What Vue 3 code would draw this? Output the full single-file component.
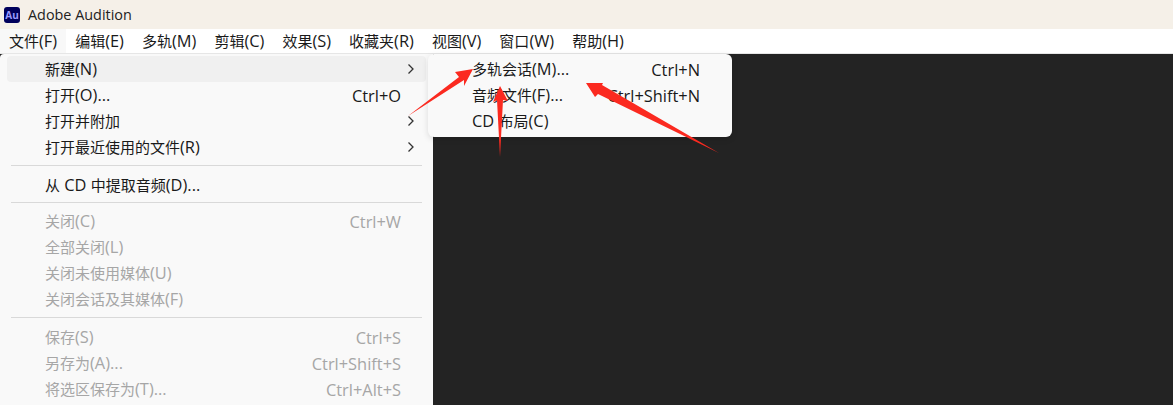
<script setup>
const menus = ["文件(F)", "编辑(E)", "多轨(M)", "剪辑(C)", "效果(S)", "收藏夹(R)", "视图(V)", "窗口(W)", "帮助(H)"];

const fileMenu = [
  { label: "新建(N)", arrow: true, active: true },
  { label: "打开(O)...", key: "Ctrl+O" },
  { label: "打开并附加", arrow: true },
  { label: "打开最近使用的文件(R)", arrow: true },
  { sep: true },
  { label: "从 CD 中提取音频(D)..." },
  { sep: true, tight: true },
  { label: "关闭(C)", key: "Ctrl+W", off: true },
  { label: "全部关闭(L)", off: true },
  { label: "关闭未使用媒体(U)", off: true },
  { label: "关闭会话及其媒体(F)", off: true },
  { sep: true },
  { label: "保存(S)", key: "Ctrl+S", off: true },
  { label: "另存为(A)...", key: "Ctrl+Shift+S", off: true },
  { label: "将选区保存为(T)...", key: "Ctrl+Alt+S", off: true },
];

const newMenu = [
  { label: "多轨会话(M)...", key: "Ctrl+N" },
  { label: "音频文件(F)...", key: "Ctrl+Shift+N" },
  { label: "CD 布局(C)" },
];

// latin runs are set a bit larger than the chinese ones
const runs = (text) => text.match(/[\x20-\x7e]+|[^\x20-\x7e]+/g);
const isLatin = (run) => /^[\x20-\x7e]/.test(run);
</script>

<template>
  <div class="window">
    <div class="titlebar">
      <span class="logo">Au</span>
      <span class="title">Adobe Audition</span>
    </div>

    <nav class="menubar">
      <span v-for="(m, i) in menus" :key="m" class="menu-name" :class="{ open: i === 0 }">
        <span v-for="run in runs(m)" :key="run" :class="{ latin: isLatin(run) }">{{ run }}</span>
      </span>
    </nav>

    <div class="main">
      <ul class="menu file-menu">
        <template v-for="(item, i) in fileMenu" :key="i">
          <li v-if="item.sep" class="sep" :class="{ tight: item.tight }"></li>
          <li v-else class="item" :class="{ active: item.active, off: item.off }">
            <span class="label">
              <span v-for="run in runs(item.label)" :key="run" :class="{ latin: isLatin(run) }">{{ run }}</span>
            </span>
            <span v-if="item.key" class="latin">{{ item.key }}</span>
            <svg v-if="item.arrow" class="chevron" width="8" height="12" viewBox="0 0 8 12">
              <path d="M1.5 1.5 6 6 1.5 10.5" fill="none" stroke="#333" stroke-width="1.3" />
            </svg>
          </li>
        </template>
      </ul>

      <ul class="menu new-menu">
        <li v-for="item in newMenu" :key="item.label" class="item">
          <span class="label">
            <span v-for="run in runs(item.label)" :key="run" :class="{ latin: isLatin(run) }">{{ run }}</span>
          </span>
          <span v-if="item.key" class="latin">{{ item.key }}</span>
        </li>
      </ul>
    </div>

    <svg class="arrows" width="1173" height="405" viewBox="0 0 1173 405">
      <polygon points="473,69 455,72 459,77 408,116 464,80 464,86" />
      <polygon points="500,86 493,102 497,100 500,157 503,100 508,101" />
      <polygon points="586,83 603,83 602,85 719,153 598,94 595,97" />
    </svg>
  </div>
</template>

<style scoped>
.window {
  position: relative;
  display: flex;
  flex-direction: column;
  height: 405px;
  overflow: hidden;
  font-family: "Open Sans", "Noto Sans CJK SC", sans-serif;
  font-size: 15px;
  color: #1a1a1a;
}

.latin {
  font-size: 16.4px;
}

.titlebar {
  display: flex;
  align-items: center;
  height: 29px;
  padding-left: 4px;
  background: #f5f0e8;
}

.logo {
  width: 16px;
  height: 16px;
  border-radius: 3px;
  background: #00005b;
  color: #9a9aff;
  font-size: 10px;
  font-weight: 700;
  line-height: 16px;
  text-align: center;
}

.title {
  margin-left: 8px;
  font-size: 14.4px;
  color: #222;
}

.menubar {
  display: flex;
  height: 24px;
  background: #fff;
  border-bottom: 1px solid #e6e6e6;
}

.menu-name {
  padding: 0 9px;
  line-height: 24px;
}

.menu-name.open {
  background: #f8f8f8;
}

.main {
  position: relative;
  flex: 1;
  background: #232323;
}

.menu {
  margin: 0;
  list-style: none;
  background: #f9f9f9;
}

.file-menu {
  width: 433px;
  height: 100%;
  box-sizing: border-box;
  padding: 2px 7px 0;
  border-top-left-radius: 4px;
}

.new-menu {
  position: absolute;
  left: 428px;
  top: 0;
  width: 304px;
  box-sizing: border-box;
  padding: 2px 0 3px;
  border-radius: 6px;
  box-shadow: 0 2px 6px rgba(0, 0, 0, 0.12);
}

.item {
  position: relative;
  display: flex;
  justify-content: space-between;
  align-items: center;
  height: 26px;
  padding: 0 25px 0 38px;
  border-radius: 4px;
  white-space: nowrap;
}

.label {
  line-height: 24px;
}

.new-menu .item {
  padding: 0 32px 0 44px;
}

.item.active {
  background: #f0f0f0;
}

.item.off {
  color: #a6a6a6;
}

.chevron {
  position: absolute;
  right: 11px;
  top: 7px;
}

.sep {
  height: 1px;
  margin: 5px 4px 6px;
  background: #d9d9d9;
}

.sep.tight {
  margin: 4px 4px 5px;
}

.arrows {
  position: absolute;
  left: 0;
  top: 0;
  pointer-events: none;
}

.arrows polygon {
  fill: #fb2a20;
}
</style>
